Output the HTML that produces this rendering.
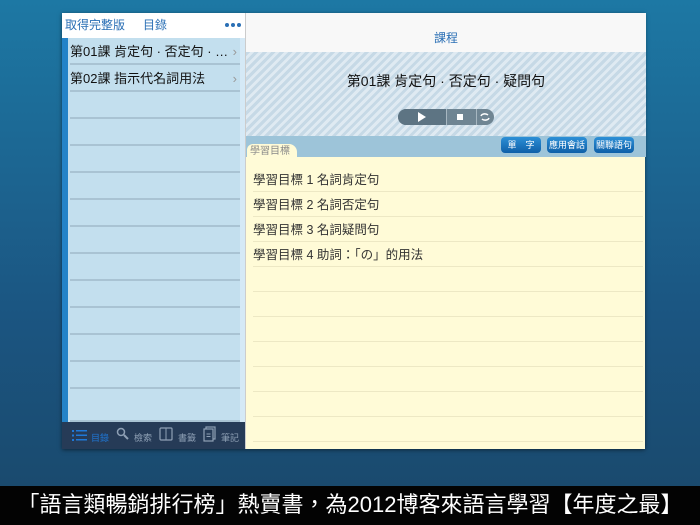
<!DOCTYPE html>
<html><head><meta charset="utf-8"><style>
*{margin:0;padding:0;box-sizing:border-box}
body{width:700px;height:525px;overflow:hidden;position:relative;background:linear-gradient(#1d78a4,#1b5581 60%,#1a4a6e 93%);font-family:"Liberation Sans","Noto Sans CJK TC",sans-serif}
.abs{position:absolute}
#bar{left:0;top:486px;width:700px;height:39px;background:#030303;color:#fff;font-size:22px;line-height:38px;text-align:center;white-space:nowrap}
#win{left:62px;top:13px;width:583px;height:436px;box-shadow:0 1px 4px rgba(0,0,0,.5)}
#lh{left:0;top:0;width:183px;height:25px;background:#fff;color:#2a6fb5;font-size:12px;line-height:12px}
#list{left:0;top:25px;width:183px;height:384px;background:#c3dfee}
#stripe{left:0;top:25px;width:6px;height:384px;background:#2483c8}
#gut{left:178px;top:25px;width:5px;height:384px;background:#d5e9f6}
.row{position:absolute;left:8px;width:170px;height:27px;border-bottom:2px solid #a9c3d3;font-size:13px;color:#111;line-height:27px;white-space:nowrap}
#tb{left:0;top:409px;width:183px;height:27px;background:#263b57;color:#8fa0b5;font-size:9px}
#right{left:183px;top:0;width:400px;height:436px;background:#fffbd7;border-left:1px solid #ccc}
#rh{left:0;top:0;width:400px;height:39px;background:#f8f8f8;color:#2a6fb5;font-size:12px;text-align:center;line-height:50px}
#str{left:0;top:39px;width:400px;height:84px;background:repeating-linear-gradient(135deg,#c6d9e6 0 3px,#dfeaf2 3px 6px)}
#tabbar{left:0;top:123px;width:400px;height:21px;background:#9dc4d9}
.btn{position:absolute;top:124px;height:16px;background:linear-gradient(#2d8fd6,#0e5fa8);border-radius:4px;color:#fff;font-size:9px;text-align:center;line-height:16px}
.cl{position:absolute;left:7px;width:390px;height:25px;border-bottom:1px solid #ede8c4;font-size:12.5px;color:#333;line-height:26px}
.dot{position:absolute;top:10px;width:4px;height:4px;border-radius:2px;background:#2a6fb5}
</style></head><body>
<div class="abs" id="win">
 <div class="abs" id="lh"><span class="abs" style="left:3px;top:6px">取得完整版</span><span class="abs" style="left:81px;top:6px">目錄</span><div class="dot" style="left:163px"></div><div class="dot" style="left:169px"></div><div class="dot" style="left:175px"></div></div>
 <div class="abs" id="list"></div>
 <div class="abs" id="stripe"></div>
 <div class="abs" id="gut"></div>
 <div class="row" style="top:25px">第01課 肯定句 · 否定句 · …<span style="position:absolute;right:3px;color:#999">›</span></div>
 <div class="row" style="top:52px">第02課 指示代名詞用法<span style="position:absolute;right:3px;color:#999">›</span></div>
 <div class="row" style="top:79px"></div><div class="row" style="top:106px"></div><div class="row" style="top:133px"></div><div class="row" style="top:160px"></div><div class="row" style="top:187px"></div><div class="row" style="top:214px"></div><div class="row" style="top:241px"></div><div class="row" style="top:268px"></div><div class="row" style="top:295px"></div><div class="row" style="top:322px"></div><div class="row" style="top:349px"></div><div class="row" style="top:376px;height:33px"></div>
 <div class="abs" id="tb">
  <svg class="abs" style="left:10px;top:7px" width="16" height="13"><g fill="#1f78d8"><rect x="0" y="1" width="2" height="2"/><rect x="0" y="5.5" width="2" height="2"/><rect x="0" y="10" width="2" height="2"/><rect x="4" y="1" width="11" height="1.5"/><rect x="4" y="5.5" width="11" height="1.5"/><rect x="4" y="10" width="11" height="1.5"/></g></svg>
  <span class="abs" style="left:29px;top:9px;color:#1f78d8">目錄</span>
  <svg class="abs" style="left:54px;top:5px" width="14" height="14"><circle cx="5" cy="5" r="3.5" fill="none" stroke="#8fa0b5" stroke-width="1.5"/><path d="M8 8 L12 12" stroke="#8fa0b5" stroke-width="2"/></svg>
  <span class="abs" style="left:72px;top:9px">檢索</span>
  <svg class="abs" style="left:97px;top:5px" width="15" height="15"><rect x="1" y="1" width="12" height="12" fill="none" stroke="#8fa0b5" stroke-width="1.2" rx="1"/><path d="M7 1V13" stroke="#8fa0b5"/></svg>
  <span class="abs" style="left:116px;top:9px">書籤</span>
  <svg class="abs" style="left:141px;top:4px" width="14" height="17"><rect x="3" y="1" width="9" height="12" fill="none" stroke="#8fa0b5" stroke-width="1.2"/><rect x="1" y="3" width="9" height="12" fill="#263b57" stroke="#8fa0b5" stroke-width="1.2"/><path d="M3.5 8h4M3.5 10.5h4" stroke="#8fa0b5"/></svg>
  <span class="abs" style="left:159px;top:9px">筆記</span>
 </div>
 <div class="abs" id="right">
  <div class="abs" id="rh">課程</div>
  <div class="abs" id="str"></div>
  <div class="abs" style="left:0;top:58px;width:400px;text-align:center;font-size:14px;color:#111">第01課 肯定句 · 否定句 · 疑問句</div>
  <div class="abs" style="left:152px;top:96px;width:96px;height:16px;border-radius:8px;background:#6f8593"></div>
  <div class="abs" style="left:152px;top:96px;width:48px;height:16px;border-radius:8px 0 0 8px;background:#5d7483"></div>
  <div class="abs" style="left:200px;top:96px;width:1px;height:16px;background:#a7b7c1"></div>
  <div class="abs" style="left:230px;top:96px;width:1px;height:16px;background:#a7b7c1"></div>
  <svg class="abs" style="left:171px;top:99px" width="10" height="10"><path d="M1 0L9 5L1 10Z" fill="#fff"/></svg>
  <div class="abs" style="left:211px;top:101px;width:6px;height:6px;background:#fff"></div>
  <svg class="abs" style="left:234px;top:99px" width="10" height="10"><path d="M1 4A4 3 0 0 1 8 3M9 6A4 3 0 0 1 2 7" fill="none" stroke="#fff" stroke-width="1.5"/></svg>
  <div class="abs" id="tabbar"></div>
  <div class="abs" style="left:1px;top:131px;width:50px;height:15px;background:#fffbd7;border-radius:6px 8px 0 0;font-size:10px;color:#888;padding:3px 0 0 3px;line-height:10px">學習目標</div>
  <div class="btn" style="left:255px;width:40px">單　字</div>
  <div class="btn" style="left:301px;width:40px">應用會話</div>
  <div class="btn" style="left:348px;width:40px">關聯語句</div>
  <div class="cl" style="top:154px">學習目標 1 名詞肯定句</div>
  <div class="cl" style="top:179px">學習目標 2 名詞否定句</div>
  <div class="cl" style="top:204px">學習目標 3 名詞疑問句</div>
  <div class="cl" style="top:229px">學習目標 4 助詞：「の」的用法</div>
  <div class="cl" style="top:254px"></div><div class="cl" style="top:279px"></div><div class="cl" style="top:304px"></div><div class="cl" style="top:329px"></div><div class="cl" style="top:354px"></div><div class="cl" style="top:379px"></div><div class="cl" style="top:404px"></div>
 </div>
</div>
<div class="abs" id="bar">「語言類暢銷排行榜」熱賣書，為2012博客來語言學習【年度之最】</div>
</body></html>
